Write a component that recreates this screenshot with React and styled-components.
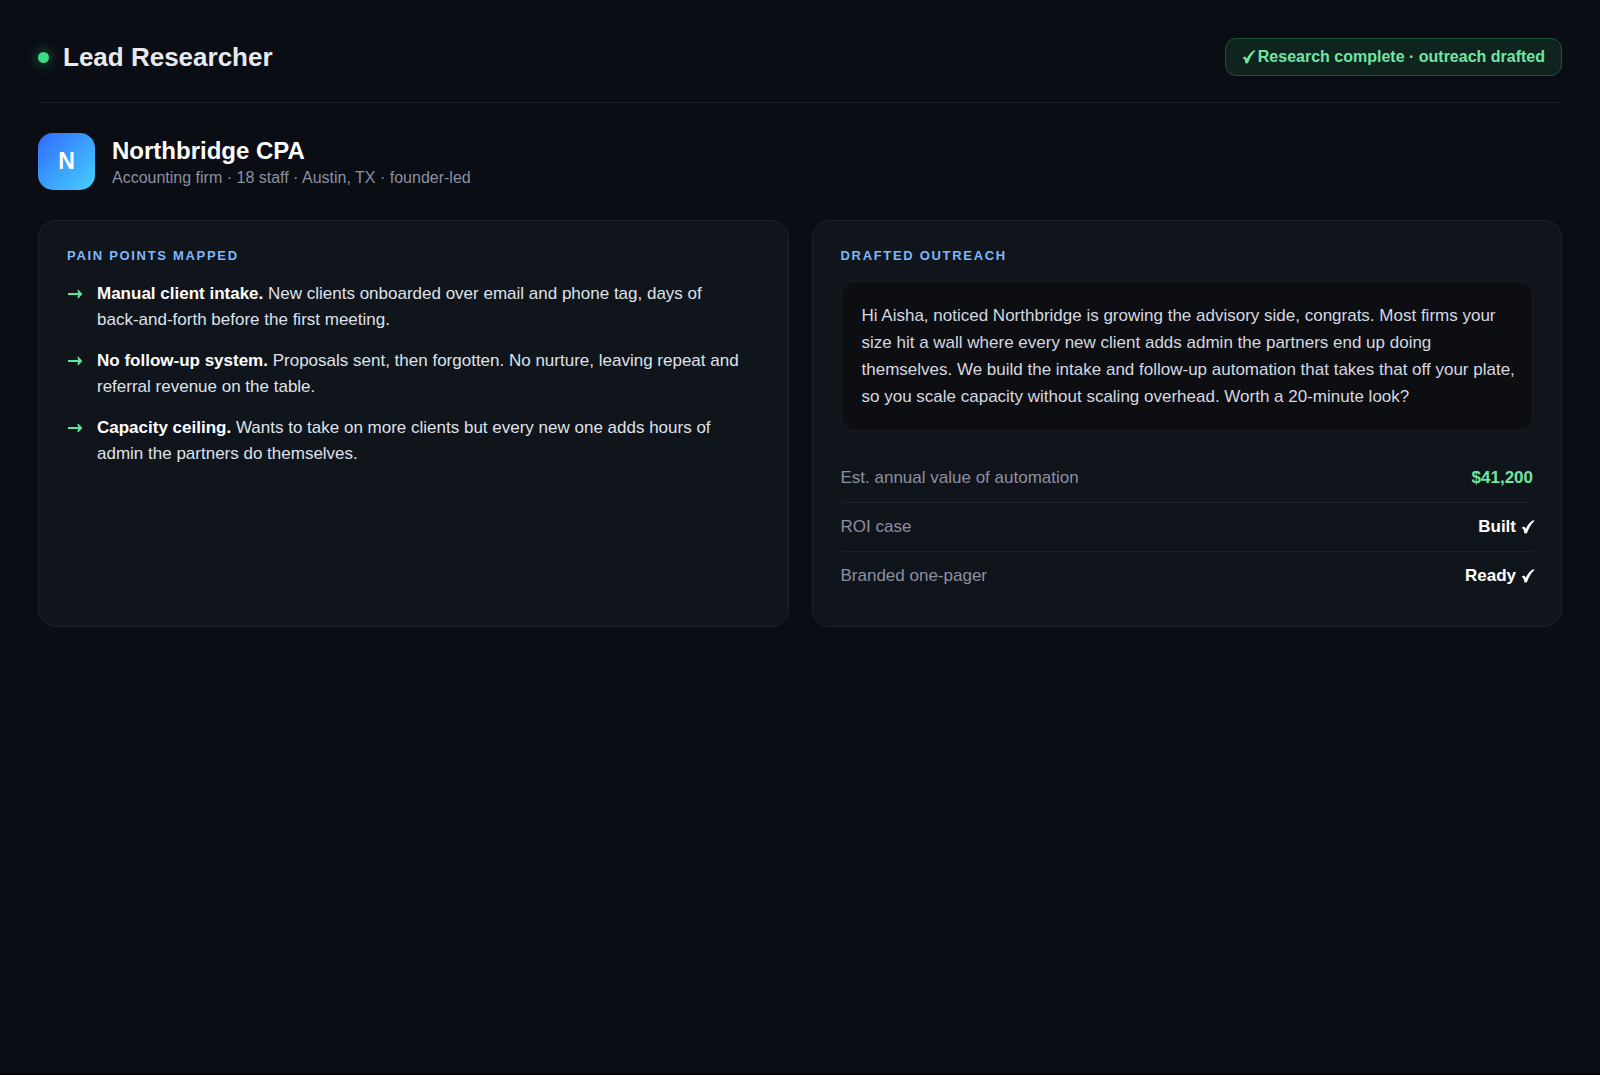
import React from 'react';
import styled, { createGlobalStyle } from 'styled-components';

const painPoints = [
    {
        title: 'Manual client intake.',
        text: <>New clients onboarded over email and phone tag, days of <span>back-and-forth</span> before the first meeting.</>,
    },
    {
        title: 'No follow-up system.',
        text: 'Proposals sent, then forgotten. No nurture, leaving repeat and referral revenue on the table.',
    },
    {
        title: 'Capacity ceiling.',
        text: 'Wants to take on more clients but every new one adds hours of admin the partners do themselves.',
    },
];

const stats = [
    {label: 'Est. annual value of automation', value: '$41,200', highlight: true},
    {label: 'ROI case', value: 'Built', done: true},
    {label: 'Branded one-pager', value: 'Ready', done: true},
];

const Check = () => (
    <CheckIcon viewBox="0 0 14 14" role="img" aria-label="done">
        <path d="M0.4 8.2 C1.2 7 2.8 6.4 3.6 7 C4.1 7.4 4.4 8.1 4.7 8.8 C6.5 5.2 8.9 2.2 11.6 0.6 L13.9 0.6 C10.4 3.8 7.8 8 5.9 13.2 L3.5 13.4 C3.1 11.2 2.5 9.2 1.8 8.6 C1.4 8.2 0.9 8.1 0.4 8.2 Z" />
    </CheckIcon>
);

const Arrow = () => (
    <ArrowIcon viewBox="0 0 16 10" aria-hidden="true">
        <path d="M1 4.1 H11.2 L10.4 0.9 L11.2 0.6 L15.4 5 L11.2 9.4 L10.4 9.1 L11.2 5.9 H1 Z" />
    </ArrowIcon>
);

const App = () => {
    return (
        <>
            <GlobalStyle />
            <Page>
                <Header>
                    <Brand>
                        <StatusDot />
                        <Title>Lead Researcher</Title>
                    </Brand>
                    <StatusPill>
                        <Check />
                        Research complete · outreach drafted
                    </StatusPill>
                </Header>

                <Company>
                    <Avatar>N</Avatar>
                    <div>
                        <CompanyName>Northbridge CPA</CompanyName>
                        <CompanyMeta>Accounting firm · 18 staff · Austin, TX · founder-led</CompanyMeta>
                    </div>
                </Company>

                <Cards>
                    <Card>
                        <CardTitle>Pain points mapped</CardTitle>
                        <PainList>
                            {painPoints.map((point) => (
                                <PainItem key={point.title}>
                                    <Arrow />
                                    <p><strong>{point.title}</strong> {point.text}</p>
                                </PainItem>
                            ))}
                        </PainList>
                    </Card>

                    <Card>
                        <CardTitle>Drafted outreach</CardTitle>
                        <Message>
                            Hi Aisha, noticed Northbridge is growing the advisory side, congrats. Most firms your
                            size hit a wall where every new client adds admin the partners end up doing
                            themselves. We build the intake and follow-up automation that takes that off your plate,
                            so you scale capacity without scaling overhead. Worth a 20-minute look?
                        </Message>
                        <Stats>
                            {stats.map((stat) => (
                                <StatRow key={stat.label}>
                                    <StatLabel>{stat.label}</StatLabel>
                                    <StatValue $highlight={stat.highlight}>
                                        {stat.value}
                                        {stat.done && <Check />}
                                    </StatValue>
                                </StatRow>
                            ))}
                        </Stats>
                    </Card>
                </Cards>
            </Page>
        </>
    );
};
export default App;

const GlobalStyle = createGlobalStyle`
    * {
        box-sizing: border-box;
        margin: 0;
        padding: 0;
    }
    body {
        background: #0a0d14;
        color: #e8eaf0;
        font-family: "Liberation Sans", Arial, Helvetica, sans-serif;
    }
`;

const Page = styled.main`
    min-height: 100vh;
    padding: 38px;
    border-bottom: 2px solid #030406;
`;

const Header = styled.header`
    display: flex;
    align-items: center;
    justify-content: space-between;
    padding-bottom: 26px;
    border-bottom: 1px solid #1b1e25;
`;

const Brand = styled.div`
    display: flex;
    align-items: center;
    gap: 14px;
`;

const StatusDot = styled.span`
    width: 11px;
    height: 11px;
    border-radius: 50%;
    background: #3ddc84;
    box-shadow: 0 0 13px rgba(61, 220, 132, 0.6);
`;

const Title = styled.h1`
    font-size: 26px;
    line-height: 30px;
    font-weight: 700;
`;

const StatusPill = styled.div`
    display: flex;
    align-items: center;
    gap: 2px;
    height: 38px;
    padding: 0 16px;
    border: 1px solid #1c5139;
    border-radius: 11px;
    background: #10241f;
    color: #6ee7a0;
    font-size: 16px;
    font-weight: 700;
`;

const CheckIcon = styled.svg`
    width: 14px;
    height: 14px;
    fill: currentColor;
`;

const Company = styled.section`
    display: flex;
    align-items: center;
    gap: 17px;
    margin: 30px 0;
`;

const Avatar = styled.div`
    display: flex;
    align-items: center;
    justify-content: center;
    width: 57px;
    height: 57px;
    border-radius: 15px;
    background: linear-gradient(135deg, #2f6bff, #46d0ff);
    color: #fff;
    font-size: 23px;
    font-weight: 700;
`;

const CompanyName = styled.h2`
    color: #fff;
    font-size: 24px;
    line-height: 32px;
    font-weight: 700;
`;

const CompanyMeta = styled.p`
    color: #8b90a0;
    font-size: 16px;
    line-height: 22px;
`;

const Cards = styled.div`
    display: grid;
    grid-template-columns: 1fr 1fr;
    gap: 23px;
`;

const Card = styled.section`
    padding: 27px 28px 26px;
    border: 1px solid #1f2226;
    border-radius: 18px;
    background: #10141b;
`;

const CardTitle = styled.h3`
    margin-bottom: 18px;
    color: #7db8ff;
    font-size: 13px;
    line-height: 15px;
    letter-spacing: 0.13em;
    text-transform: uppercase;
`;

const PainList = styled.ul`
    display: flex;
    flex-direction: column;
    gap: 15px;
    list-style: none;
`;

const PainItem = styled.li`
    display: flex;
    gap: 14px;
    font-size: 17px;
    line-height: 26px;
    color: #dfe2ea;

    strong {
        color: #fff;
    }

    span {
        white-space: nowrap;
    }
`;

const ArrowIcon = styled.svg`
    flex: none;
    width: 16px;
    height: 26px;
    fill: #5fe39b;
`;

const Message = styled.p`
    padding: 20px 16px 20px 20px;
    border: 1px solid #191c1f;
    border-radius: 13px;
    background: #0c0e12;
    color: #d5d8e0;
    font-size: 17px;
    line-height: 27px;
`;

const Stats = styled.dl`
    margin-top: 22px;
`;

const StatRow = styled.div`
    display: flex;
    align-items: center;
    justify-content: space-between;
    height: 49px;
    font-size: 17px;

    & + & {
        border-top: 1px solid #1d2024;
    }
`;

const StatLabel = styled.dt`
    color: #8b90a0;
`;

const StatValue = styled.dd`
    display: flex;
    align-items: center;
    gap: 5px;
    color: ${({$highlight}) => ($highlight ? '#6ee7a0' : '#fff')};
    font-weight: 700;

    /* the tick hangs slightly past the row edge */
    svg {
        margin-right: -2px;
    }
`;
